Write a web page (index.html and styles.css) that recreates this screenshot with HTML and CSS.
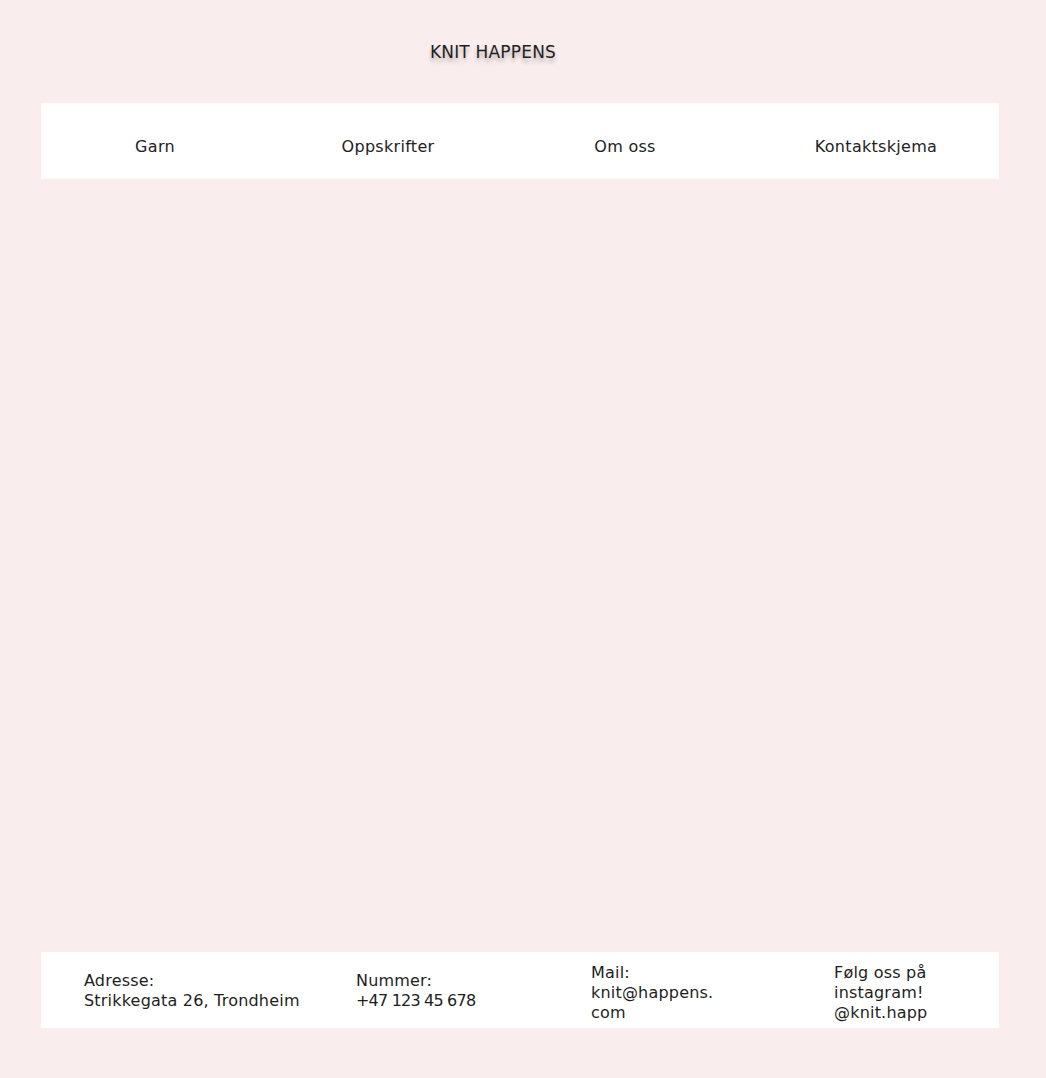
FILE: index.html
```html
<!DOCTYPE html>
<html lang="no">
<head>
<meta charset="utf-8">
<title>Knit Happens</title>
<link rel="stylesheet" href="styles.css">
</head>
<body>
<div class="page">
  <header class="site-header">
    <h1 class="logo">KNIT HAPPENS</h1>
  </header>
  <nav class="nav">
    <a class="nav-item" href="#">Garn</a>
    <a class="nav-item" href="#">Oppskrifter</a>
    <a class="nav-item" href="#">Om oss</a>
    <a class="nav-item nav-last" href="#">Kontaktskjema</a>
  </nav>
  <main class="content"></main>
  <footer class="footer">
    <p class="f-col">Adresse:<br>Strikkegata 26, Trondheim</p>
    <p class="f-col">Nummer:<br><span class="f-num">+47 123 45 678</span></p>
    <p class="f-col f-tall">Mail:<br>knit@happens.<br>com</p>
    <p class="f-col f-tall">Følg oss på<br>instagram!<br>@knit.happ</p>
  </footer>
</div>
</body>
</html>
```
FILE: styles.css
```css
html, body {
  margin: 0;
  padding: 0;
}
body {
  background: #f9eded;
  font-family: "DejaVu Sans", "Open Sans", sans-serif;
  color: #222;
}
.page {
  padding: 0 47px 50px 41px;
  display: flex;
  flex-direction: column;
}
.site-header {
  height: 103px;
  box-sizing: border-box;
  padding: 42px 54px 0 0;
  text-align: center;
}
.logo {
  margin: 0;
  font-size: 17px;
  font-weight: normal;
  line-height: 20px;
  letter-spacing: 0.2px;
  color: #1f1f1f;
  text-shadow: 0 4px 4px rgba(0, 0, 0, 0.25);
}
.nav {
  background: #fff;
  height: 76px;
  box-sizing: border-box;
  padding: 34px 0 22px;
  display: grid;
  grid-template-columns: 228px 238px 236px 1fr;
}
.nav-item {
  text-align: center;
  font-size: 16px;
  line-height: 20px;
  letter-spacing: 0.3px;
  color: #222;
  text-decoration: none;
}
.nav-last {
  padding-left: 10px;
}
.content {
  height: 773px;
}
.footer {
  background: #fff;
  height: 76px;
  box-sizing: border-box;
  padding-left: 43px;
  padding-top: 2px;
  display: grid;
  grid-template-columns: 272px 235px 243px 1fr;
  align-items: center;
}
.f-col {
  margin: 0;
  font-size: 16px;
  line-height: 20px;
  letter-spacing: 0.2px;
  color: #1e1e1e;
}
.f-tall {
  padding-top: 4px;
}
.f-num {
  letter-spacing: -0.8px;
}
```
